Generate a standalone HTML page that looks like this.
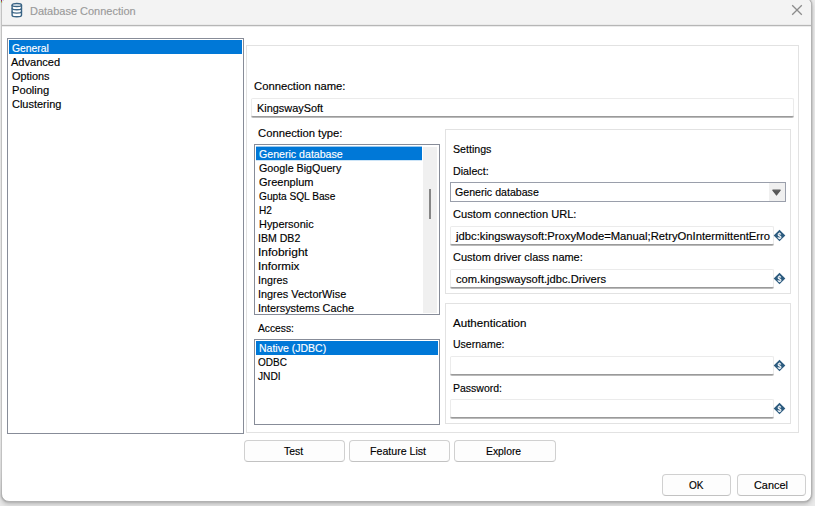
<!DOCTYPE html>
<html>
<head>
<meta charset="utf-8">
<title>Database Connection</title>
<style>
*{box-sizing:border-box;margin:0;padding:0}
html,body{width:815px;height:506px;overflow:hidden}
body{background:#e9e9e9;font-family:"Liberation Sans",sans-serif;font-size:11px;color:#000;position:relative}
.abs{position:absolute}
#win{left:1px;top:-3px;width:811px;height:505px;background:#fff;border:1px solid #b2b2b2;border-radius:8px;box-shadow:0 0 2px rgba(0,0,0,.3),0 3px 4px rgba(0,0,0,.16)}
#tbar{left:2px;top:-2px;width:809px;height:27px;background:#f3f3f3;border-radius:7px 7px 0 0}
#tline{left:2px;top:25px;width:809px;height:1px;background:#b6b6b6;box-shadow:0 1px 0 #ececec,0 -1px 0 #ebebeb}
.t{position:absolute;white-space:nowrap;line-height:14px;height:14px;transform-origin:0 0;-webkit-text-stroke:0.15px currentColor}
.lb{position:absolute;background:#fff;border:1px solid #878c98}
.sel{position:absolute;background:#0078d7;height:14px}
.grp{position:absolute;border:1px solid #e2e2e2;background:#fff}
.inp{position:absolute;height:19px;border:1px solid #ebebeb;border-bottom:1px solid #9a9a9a;border-radius:2px;background:#fff;box-shadow:0 1px 0 rgba(0,0,0,.27)}
.btn{position:absolute;height:22px;border:1px solid #d0d0d0;border-bottom-color:#c2c2c2;border-radius:4px;background:#fdfdfd}
</style>
</head>
<body>
<div id="win" class="abs"></div>
<div id="tbar" class="abs"></div>
<div id="tline" class="abs"></div>
<div class="abs" style="left:0;top:0;width:1px;height:496px;background:linear-gradient(#e8e8e8 0,#e2e2e2 440px,#d6d6d6 480px,#cbcbcb 496px)"></div><div class="abs" style="left:1px;top:0;width:1px;height:494px;background:linear-gradient(#c2c2c2 0,#c2c2c2 470px,#b4b4b4 494px)"></div><div class="abs" style="left:0;top:0;width:1px;height:3px;background:#b8f0ee"></div><div class="abs" style="left:0;top:0;width:1px;height:1px;background:#f0eec4"></div><div class="abs" style="left:1px;top:0;width:1px;height:1px;background:#80208a"></div><div class="abs" style="left:1px;top:1px;width:1px;height:1px;background:#b07424"></div><div class="abs" style="left:1px;top:2px;width:1px;height:1px;background:#c8a46c"></div><div class="abs" style="left:2px;top:0;width:1px;height:2px;background:#dde9ee"></div>

<svg class="abs" style="left:10px;top:2px" width="14" height="17" viewBox="0 0 14 17">
<g fill="none" stroke="#3a6485" stroke-width="1.4">
<path d="M2.1 3v10.15a4.7 1.55 0 0 0 9.4 0V3" fill="#fff"/>
<ellipse cx="6.8" cy="3" rx="4.7" ry="1.55" fill="#f4f8fb"/>
<path d="M2.1 6.15a4.7 1.55 0 0 0 9.4 0"/>
<path d="M2.1 9.55a4.7 1.55 0 0 0 9.4 0"/>
</g>
</svg>
<div class="t" id="title" style="left:29.80px;top:4px;color:#9a9a9a;transform:scaleX(0.9983);">Database Connection</div>
<svg class="abs" style="left:791px;top:4px" width="12" height="12" viewBox="0 0 12 12"><path d="M1.2 1.2l9.6 9.6M10.8 1.2l-9.6 9.6" stroke="#8c8c8c" stroke-width="1.3" fill="none"/></svg>

<!-- left category list -->
<div class="lb" style="left:7px;top:38px;width:237px;height:396px"></div>
<div class="sel" style="left:9px;top:40px;width:233px"></div>
<div class="t" id="i_gen" style="left:12.20px;top:41px;color:#fff;transform:scaleX(0.9408);">General</div>
<div class="t" id="i_adv" style="left:11.30px;top:55px;color:#000;transform:scaleX(1.0039);">Advanced</div>
<div class="t" id="i_opt" style="left:12.00px;top:69px;color:#000;transform:scaleX(0.9893);">Options</div>
<div class="t" id="i_poo" style="left:12.20px;top:83px;color:#000;transform:scaleX(1.0143);">Pooling</div>
<div class="t" id="i_clu" style="left:12.00px;top:97px;color:#000;transform:scaleX(0.9979);">Clustering</div>

<!-- main panel -->
<div class="grp" style="left:246px;top:45px;width:553px;height:388px"></div>

<div class="t" id="l_cn" style="left:253.90px;top:79px;color:#000;transform:scaleX(1.0244);">Connection name:</div>
<div class="inp" style="left:251px;top:98px;width:543px"></div>
<div class="t" id="v_cn" style="left:256.70px;top:101px;color:#000;transform:scaleX(0.9912);">KingswaySoft</div>

<div class="t" id="l_ct" style="left:257.70px;top:126px;color:#000;transform:scaleX(1.0231);">Connection type:</div>
<div class="lb" style="left:254px;top:144px;width:186px;height:171px"></div>
<div class="abs" style="left:255px;top:145px;width:184px;height:169px;overflow:hidden">
<svg class="abs" style="left:0;top:0" width="184" height="20"><rect x="1" y="1.6" width="166" height="13.6" fill="#0078d7"/></svg>
<div class="abs" style="left:-255px;top:-145px">
<div class="t" id="c_0" style="left:259.10px;top:147px;color:#fff;transform:scaleX(0.9641);">Generic database</div>
<div class="t" id="c_1" style="left:259.00px;top:161px;color:#000;transform:scaleX(0.9755);">Google BigQuery</div>
<div class="t" id="c_2" style="left:259.00px;top:175px;color:#000;transform:scaleX(1.0009);">Greenplum</div>
<div class="t" id="c_3" style="left:259.00px;top:189px;color:#000;transform:scaleX(0.9224);">Gupta SQL Base</div>
<div class="t" id="c_4" style="left:259.10px;top:203px;color:#000;transform:scaleX(0.9180);">H2</div>
<div class="t" id="c_5" style="left:259.10px;top:217px;color:#000;transform:scaleX(0.9924);">Hypersonic</div>
<div class="t" id="c_6" style="left:257.84px;top:231px;color:#000;transform:scaleX(0.9605);">IBM DB2</div>
<div class="t" id="c_7" style="left:257.71px;top:245px;color:#000;transform:scaleX(1.0869);">Infobright</div>
<div class="t" id="c_8" style="left:257.74px;top:259px;color:#000;transform:scaleX(1.0565);">Informix</div>
<div class="t" id="c_9" style="left:257.83px;top:273px;color:#000;transform:scaleX(0.9743);">Ingres</div>
<div class="t" id="c_10" style="left:257.81px;top:287px;color:#000;transform:scaleX(0.9882);">Ingres VectorWise</div>
<div class="t" id="c_11" style="left:257.81px;top:301px;color:#000;transform:scaleX(0.9877);">Intersystems Cache</div>
</div>
<div class="abs" style="left:168px;top:2px;width:14px;height:166px;background:#f0f0f0"></div>
<div class="abs" style="left:174px;top:44px;width:2px;height:30px;background:#868686"></div>
</div>

<div class="t" id="l_ac" style="left:257.60px;top:321px;color:#000;transform:scaleX(0.9336);">Access:</div>
<div class="lb" style="left:254px;top:339px;width:186px;height:86px"></div>
<div class="sel" style="left:256px;top:341px;width:182px"></div>
<div class="t" id="a_nat" style="left:258.80px;top:341px;color:#fff;transform:scaleX(0.9551);">Native (JDBC)</div>
<div class="t" id="a_odb" style="left:258.30px;top:355px;color:#000;transform:scaleX(0.9078);">ODBC</div>
<div class="t" id="a_jnd" style="left:257.60px;top:369px;color:#000;transform:scaleX(0.9267);">JNDI</div>

<!-- settings -->
<div class="grp" style="left:445px;top:129px;width:346px;height:165px"></div>
<div class="t" id="l_set" style="left:453.40px;top:142px;color:#000;transform:scaleX(0.9666);">Settings</div>
<div class="t" id="l_dia" style="left:453.40px;top:164px;color:#000;transform:scaleX(0.9721);">Dialect:</div>
<div class="abs" style="left:450px;top:182px;width:336px;height:20px;border:1px solid #9a9fab;background:#fff"></div>
<div class="abs" style="left:769px;top:183px;width:16px;height:18px;background:#f0f0f0"></div>
<svg class="abs" style="left:771px;top:188px" width="11" height="9" viewBox="0 0 11 9"><path d="M1.8 2.2h7.4L5.5 7z" fill="#585858" stroke="#585858" stroke-width="1.2" stroke-linejoin="round"/></svg>
<div class="t" id="v_dia" style="left:455.00px;top:185px;color:#000;transform:scaleX(0.9652);">Generic database</div>
<div class="t" id="l_url" style="left:453.40px;top:207px;color:#000;transform:scaleX(1.0096);">Custom connection URL:</div>
<div class="inp" style="left:450px;top:226px;width:324px"></div>
<div class="abs" style="left:451px;top:227px;width:321px;height:17px;overflow:hidden"><div class="t" id="v_url" style="left:5.32px;top:2px;transform:scaleX(1.0224)">jdbc:kingswaysoft:ProxyMode=Manual;RetryOnIntermittentErro</div></div>
<div class="t" id="l_drv" style="left:453.40px;top:250px;color:#000;transform:scaleX(0.9965);">Custom driver class name:</div>
<div class="inp" style="left:450px;top:269px;width:324px"></div>
<div class="t" id="v_drv" style="left:455.90px;top:272px;color:#000;transform:scaleX(1.0139);">com.kingswaysoft.jdbc.Drivers</div>

<!-- authentication -->
<div class="grp" style="left:445px;top:303px;width:346px;height:121px"></div>
<div class="t" id="l_auth" style="left:453.40px;top:316px;color:#000;transform:scaleX(1.0517);">Authentication</div>
<div class="t" id="l_usr" style="left:453.40px;top:337px;color:#000;transform:scaleX(0.9564);">Username:</div>
<div class="inp" style="left:450px;top:356px;width:324px"></div>
<div class="t" id="l_pwd" style="left:453.40px;top:381px;color:#000;transform:scaleX(0.9533);">Password:</div>
<div class="inp" style="left:450px;top:399px;width:324px"></div>

<svg class="abs" style="left:773px;top:228.5px;will-change:transform" width="13" height="13" viewBox="0 0 13 13"><path d="M6.5 0.7L12.3 6.5 6.5 12.3 0.7 6.5z" fill="#2c5b7f"/><text transform="translate(6.5 9.75) scale(.75 1)" font-family="Liberation Sans, sans-serif" font-size="9.5" font-weight="bold" fill="#fff" text-anchor="middle">$</text></svg>
<svg class="abs" style="left:773px;top:271.6px;will-change:transform" width="13" height="13" viewBox="0 0 13 13"><path d="M6.5 0.7L12.3 6.5 6.5 12.3 0.7 6.5z" fill="#2c5b7f"/><text transform="translate(6.5 9.75) scale(.75 1)" font-family="Liberation Sans, sans-serif" font-size="9.5" font-weight="bold" fill="#fff" text-anchor="middle">$</text></svg>
<svg class="abs" style="left:773px;top:358.6px;will-change:transform" width="13" height="13" viewBox="0 0 13 13"><path d="M6.5 0.7L12.3 6.5 6.5 12.3 0.7 6.5z" fill="#2c5b7f"/><text transform="translate(6.5 9.75) scale(.75 1)" font-family="Liberation Sans, sans-serif" font-size="9.5" font-weight="bold" fill="#fff" text-anchor="middle">$</text></svg>
<svg class="abs" style="left:773px;top:402.1px;will-change:transform" width="13" height="13" viewBox="0 0 13 13"><path d="M6.5 0.7L12.3 6.5 6.5 12.3 0.7 6.5z" fill="#2c5b7f"/><text transform="translate(6.5 9.75) scale(.75 1)" font-family="Liberation Sans, sans-serif" font-size="9.5" font-weight="bold" fill="#fff" text-anchor="middle">$</text></svg>

<!-- buttons -->
<div class="btn" style="left:244px;top:440px;width:101px"></div><div class="t" id="b_test" style="left:283.60px;top:444px;color:#000;transform:scaleX(0.9494);">Test</div>
<div class="btn" style="left:349px;top:440px;width:101px"></div><div class="t" id="b_fl" style="left:369.70px;top:444px;color:#000;transform:scaleX(0.9651);">Feature List</div>
<div class="btn" style="left:454px;top:440px;width:102px"></div><div class="t" id="b_ex" style="left:485.60px;top:444px;color:#000;transform:scaleX(0.9414);">Explore</div>
<div class="btn" style="left:662px;top:474px;width:69px"></div><div class="t" id="b_ok" style="left:688.50px;top:478px;color:#000;transform:scaleX(0.9120);">OK</div>
<div class="btn" style="left:737px;top:474px;width:69px"></div><div class="t" id="b_ca" style="left:754.30px;top:478px;color:#000;transform:scaleX(0.9883);">Cancel</div>
</body>
</html>
